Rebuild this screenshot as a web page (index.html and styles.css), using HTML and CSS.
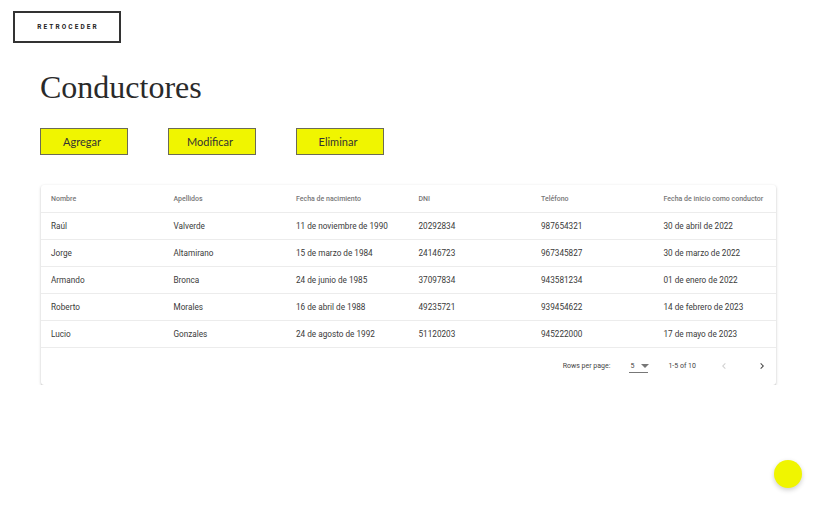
FILE: index.html
```html
<!DOCTYPE html>
<html lang="es">
<head>
<meta charset="utf-8">
<title>Conductores</title>
<link rel="stylesheet" href="styles.css">
</head>
<body>
<div class="page">
  <button class="back">RETROCEDER</button>
  <h1 class="title">Conductores</h1>
  <div class="actions">
    <button class="action">Agregar</button>
    <button class="action">Modificar</button>
    <button class="action">Eliminar</button>
  </div>
  <div class="card">
    <table class="grid">
      <thead>
        <tr><th>Nombre</th><th>Apellidos</th><th>Fecha de nacimiento</th><th>DNI</th><th>Teléfono</th><th>Fecha de inicio como conductor</th></tr>
      </thead>
      <tbody>
        <tr><td>Raúl</td><td>Valverde</td><td>11 de noviembre de 1990</td><td>20292834</td><td>987654321</td><td>30 de abril de 2022</td></tr>
        <tr><td>Jorge</td><td>Altamirano</td><td>15 de marzo de 1984</td><td>24146723</td><td>967345827</td><td>30 de marzo de 2022</td></tr>
        <tr><td>Armando</td><td>Bronca</td><td>24 de junio de 1985</td><td>37097834</td><td>943581234</td><td>01 de enero de 2022</td></tr>
        <tr><td>Roberto</td><td>Morales</td><td>16 de abril de 1988</td><td>49235721</td><td>939454622</td><td>14 de febrero de 2023</td></tr>
        <tr><td>Lucio</td><td>Gonzales</td><td>24 de agosto de 1992</td><td>51120203</td><td>945222000</td><td>17 de mayo de 2023</td></tr>
      </tbody>
    </table>
    <div class="pager">
      <span class="rpp">Rows per page:</span>
      <span class="select">5
        <svg class="caret" width="8" height="4" viewBox="0 0 8 4"><path d="M0 0h8L4 4z" fill="#777"/></svg>
      </span>
      <span class="range">1-5 of 10</span>
      <span class="nav">
        <svg width="12" height="12" viewBox="0 0 24 24"><path d="M15.4 7.4 14 6l-6 6 6 6 1.4-1.4L10.8 12z" fill="#cfcfcf"/></svg>
        <svg width="12" height="12" viewBox="0 0 24 24"><path d="M10 6 8.6 7.4 13.2 12l-4.6 4.6L10 18l6-6z" fill="#444"/></svg>
      </span>
    </div>
  </div>
</div>
<div class="fab"></div>
</body>
</html>
```
FILE: styles.css
```css
* { box-sizing: border-box; }
html, body { margin: 0; padding: 0; background: #fff; }
body { font-family: Roboto, "Liberation Sans", sans-serif; color: #222; }
.page { padding: 11px 0 0 13px; }
.back {
  display: block;
  width: 108px; height: 32px;
  border: 2px solid #333;
  background: #fff;
  font-family: Roboto, sans-serif;
  font-weight: 700;
  font-size: 6.5px;
  letter-spacing: 2.1px;
  color: #222;
  padding: 0 0 0 2px;
  text-align: center;
}
.title {
  margin: 26px 0 0 27px;
  font-family: "Liberation Serif", serif;
  font-weight: 400;
  font-size: 32px;
  line-height: 36px;
  color: #2a2a2a;
}
.actions { display: flex; gap: 40px; margin: 23px 0 0 27px; }
.action {
  width: 88px; height: 27px;
  background: #f0f500;
  border: 1px solid #6b6b55;
  font-family: Lato, "Open Sans", sans-serif;
  font-size: 11px;
  color: #333;
  padding: 0 4px 0 0;
}
.card {
  margin: 30px 0 0 28px;
  width: 735px;
  background: #fff;
  border-radius: 3px;
  box-shadow: 0 1px 3px rgba(0,0,0,0.22), 0 1px 1px rgba(0,0,0,0.1);
}
.grid { width: 100%; border-collapse: collapse; table-layout: fixed; }
.grid th, .grid td {
  text-align: left;
  padding: 1px 0 0 10px;
  height: 27px;
  border-bottom: 1px solid #ececec;
  white-space: nowrap;
}
.grid th { font-size: 7px; font-weight: 500; color: #777; }
.grid td { font-size: 8.2px; color: #3a3a3a; }
.pager {
  height: 37px;
  display: flex;
  align-items: center;
  justify-content: flex-end;
  font-size: 7px;
  color: #444;
  padding-right: 8px;
}
.rpp { margin-right: 19px; }
.select {
  display: inline-flex; align-items: center; gap: 7px;
  height: 14px; width: 19px;
  border-bottom: 1px solid #777;
  margin-right: 20px;
  padding-left: 1px;
}
.caret { flex: none; }
.range { margin-right: 22px; }
.nav { display: flex; gap: 26px; }
.fab {
  position: fixed;
  left: 774px; top: 460px;
  width: 28px; height: 28px;
  border-radius: 50%;
  background: #f0f500;
  box-shadow: 0 2px 5px rgba(0,0,0,0.2);
}
```
